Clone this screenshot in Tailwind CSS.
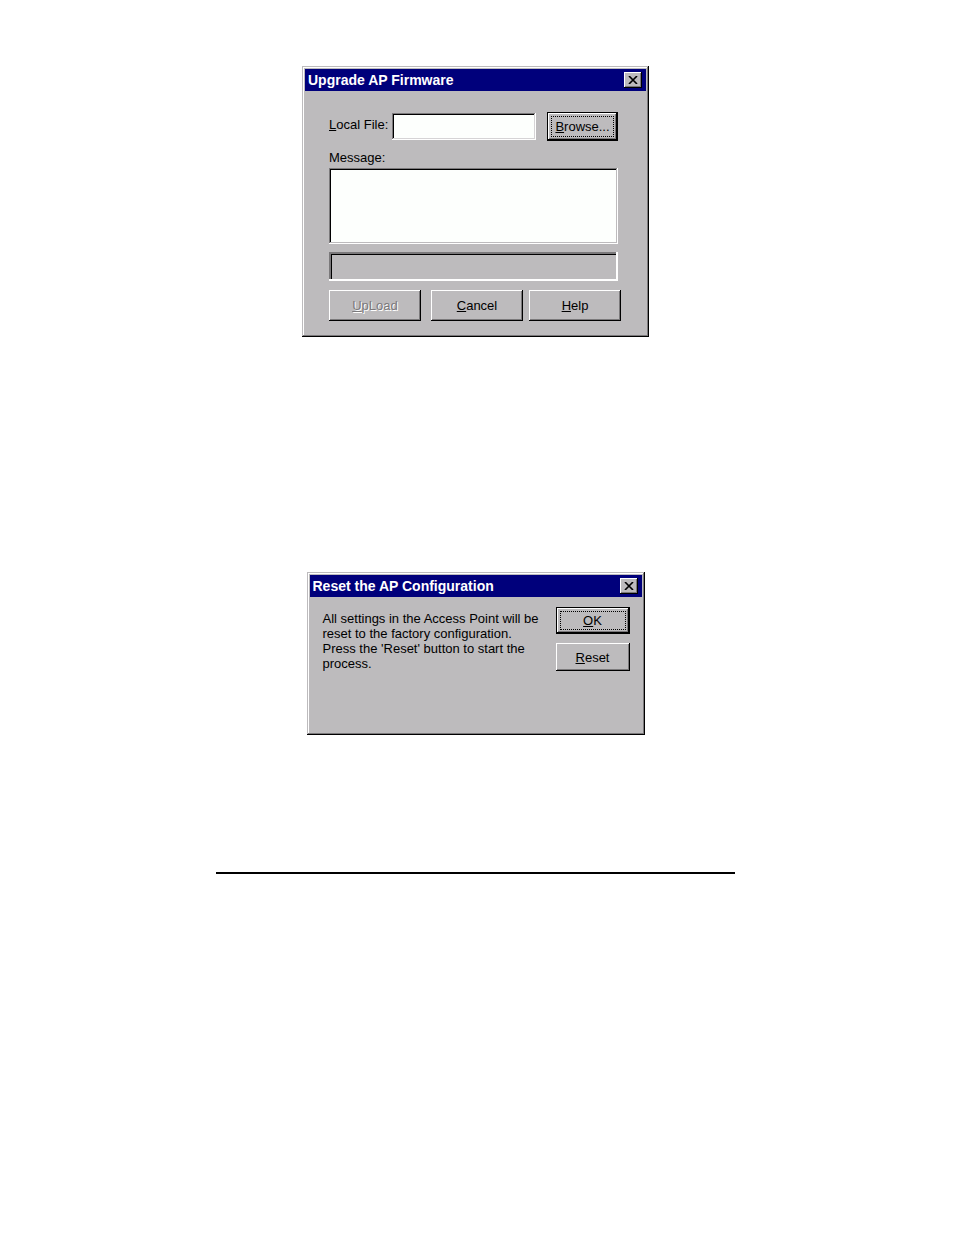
<!DOCTYPE html>
<html lang="en">
<head>
<meta charset="utf-8">
<meta name="viewport" content="width=device-width, initial-scale=1">
<title>Upgrade AP Firmware</title>
<script src="https://cdn.jsdelivr.net/npm/@tailwindcss/browser@4"></script>
</head>
<body class="bg-white text-black font-['Liberation_Sans',Arial,sans-serif] text-[13px] leading-[15px]">
<main class="flex flex-col items-center pt-[66px] pr-[3px]">

  <section role="dialog" aria-labelledby="t1" class="w-full max-w-[347px] bg-[#bdbbbd] p-[3px] pb-4 shadow-[inset_-1px_-1px_#000,inset_1px_1px_#bdbbbd,inset_-2px_-2px_#7b797b,inset_2px_2px_#fff]">
    <header class="flex h-[22px] items-center justify-between bg-[#00007b] pr-1 pl-[3px]">
      <h1 id="t1" class="text-[14px] font-bold text-white">Upgrade AP Firmware</h1>
      <button type="button" aria-label="Close" class="grid h-4 w-[18px] place-items-center bg-[#bdbbbd] shadow-[inset_-1px_-1px_#000,inset_1px_1px_#fff,inset_-2px_-2px_#7b797b]">
        <svg width="10" height="8" viewBox="0 0 10 8"><path d="M1 0L9 8M9 0L1 8" stroke="#000" stroke-width="1.6"/></svg>
      </button>
    </header>
    <form class="pt-[21px] pr-[25px] pl-6">
      <div class="flex items-center pr-[3px]">
        <label for="file" class="w-[63px] pb-1 whitespace-nowrap"><u>L</u>ocal File:</label>
        <input id="file" type="text" class="h-[27px] min-w-0 flex-1 bg-[#fdfffd] px-1 shadow-[inset_-1px_-1px_#fff,inset_1px_1px_#7b797b,inset_-2px_-2px_#d6d4d6,inset_2px_2px_#000]">
        <button type="button" class="ml-[11px] h-[29px] w-[71px] border border-black bg-[#bdbbbd] p-[3px] shadow-[inset_-1px_-1px_#000,inset_1px_1px_#fff,inset_-2px_-2px_#7b797b]"><span class="block border border-dotted border-black leading-[19px]"><u>B</u>rowse...</span></button>
      </div>
      <label for="msg" class="mt-[9px] block">Message:</label>
      <div class="pr-[3px]">
        <textarea id="msg" class="mt-[3px] block h-[76px] w-full resize-none bg-[#fdfffd] p-1 shadow-[inset_-1px_-1px_#fff,inset_1px_1px_#7b797b,inset_-2px_-2px_#bdbbbd,inset_2px_2px_#000]"></textarea>
        <div role="progressbar" aria-label="Upload progress" class="mt-2 h-[29px] bg-[#bdbbbd] shadow-[inset_-2px_-2px_#fff,inset_2px_2px_#7b797b,inset_3px_3px_#000]"></div>
      </div>
      <div class="mt-[9px] flex">
        <button type="button" disabled class="h-[31px] w-[92px] bg-[#bdbbbd] text-[#7b797b] shadow-[inset_-1px_-1px_#000,inset_1px_1px_#fff,inset_-2px_-2px_#7b797b] [text-shadow:1px_1px_#fff]"><u>U</u>pLoad</button>
        <button type="button" class="ml-[10px] h-[31px] w-[92px] bg-[#bdbbbd] shadow-[inset_-1px_-1px_#000,inset_1px_1px_#fff,inset_-2px_-2px_#7b797b]"><u>C</u>ancel</button>
        <button type="button" class="ml-[6px] h-[31px] w-[92px] bg-[#bdbbbd] shadow-[inset_-1px_-1px_#000,inset_1px_1px_#fff,inset_-2px_-2px_#7b797b]"><u>H</u>elp</button>
      </div>
    </form>
  </section>

  <section role="dialog" aria-labelledby="t2" class="mt-[235px] w-full max-w-[338px] bg-[#bdbbbd] p-[3px] pb-16 shadow-[inset_-1px_-1px_#000,inset_1px_1px_#bdbbbd,inset_-2px_-2px_#7b797b,inset_2px_2px_#fff]">
    <header class="flex h-[22px] items-center justify-between bg-[#00007b] pr-1 pl-[3px]">
      <h2 id="t2" class="text-[14px] font-bold text-white">Reset the AP Configuration</h2>
      <button type="button" aria-label="Close" class="grid h-4 w-[18px] place-items-center bg-[#bdbbbd] shadow-[inset_-1px_-1px_#000,inset_1px_1px_#fff,inset_-2px_-2px_#7b797b]">
        <svg width="10" height="8" viewBox="0 0 10 8"><path d="M1 0L9 8M9 0L1 8" stroke="#000" stroke-width="1.6"/></svg>
      </button>
    </header>
    <div class="flex justify-between pt-[10px] pr-3 pl-[13px]">
      <p class="pt-1 whitespace-nowrap">All settings in the Access Point will be<br>reset to the factory configuration.<br>Press the 'Reset' button to start the<br>process.</p>
      <div class="flex w-[74px] shrink-0 flex-col gap-[9px]">
        <button type="button" class="h-[27px] border border-black bg-[#bdbbbd] p-[3px] shadow-[inset_-1px_-1px_#000,inset_1px_1px_#fff,inset_-2px_-2px_#7b797b]"><span class="block border border-dotted border-black leading-[17px]"><u>O</u>K</span></button>
        <button type="button" class="h-7 bg-[#bdbbbd] shadow-[inset_-1px_-1px_#000,inset_1px_1px_#fff,inset_-2px_-2px_#7b797b]"><u>R</u>eset</button>
      </div>
    </div>
  </section>

  <hr class="mt-[137px] w-full max-w-[519px] border-t-2 border-black">
</main>
</body>
</html>
